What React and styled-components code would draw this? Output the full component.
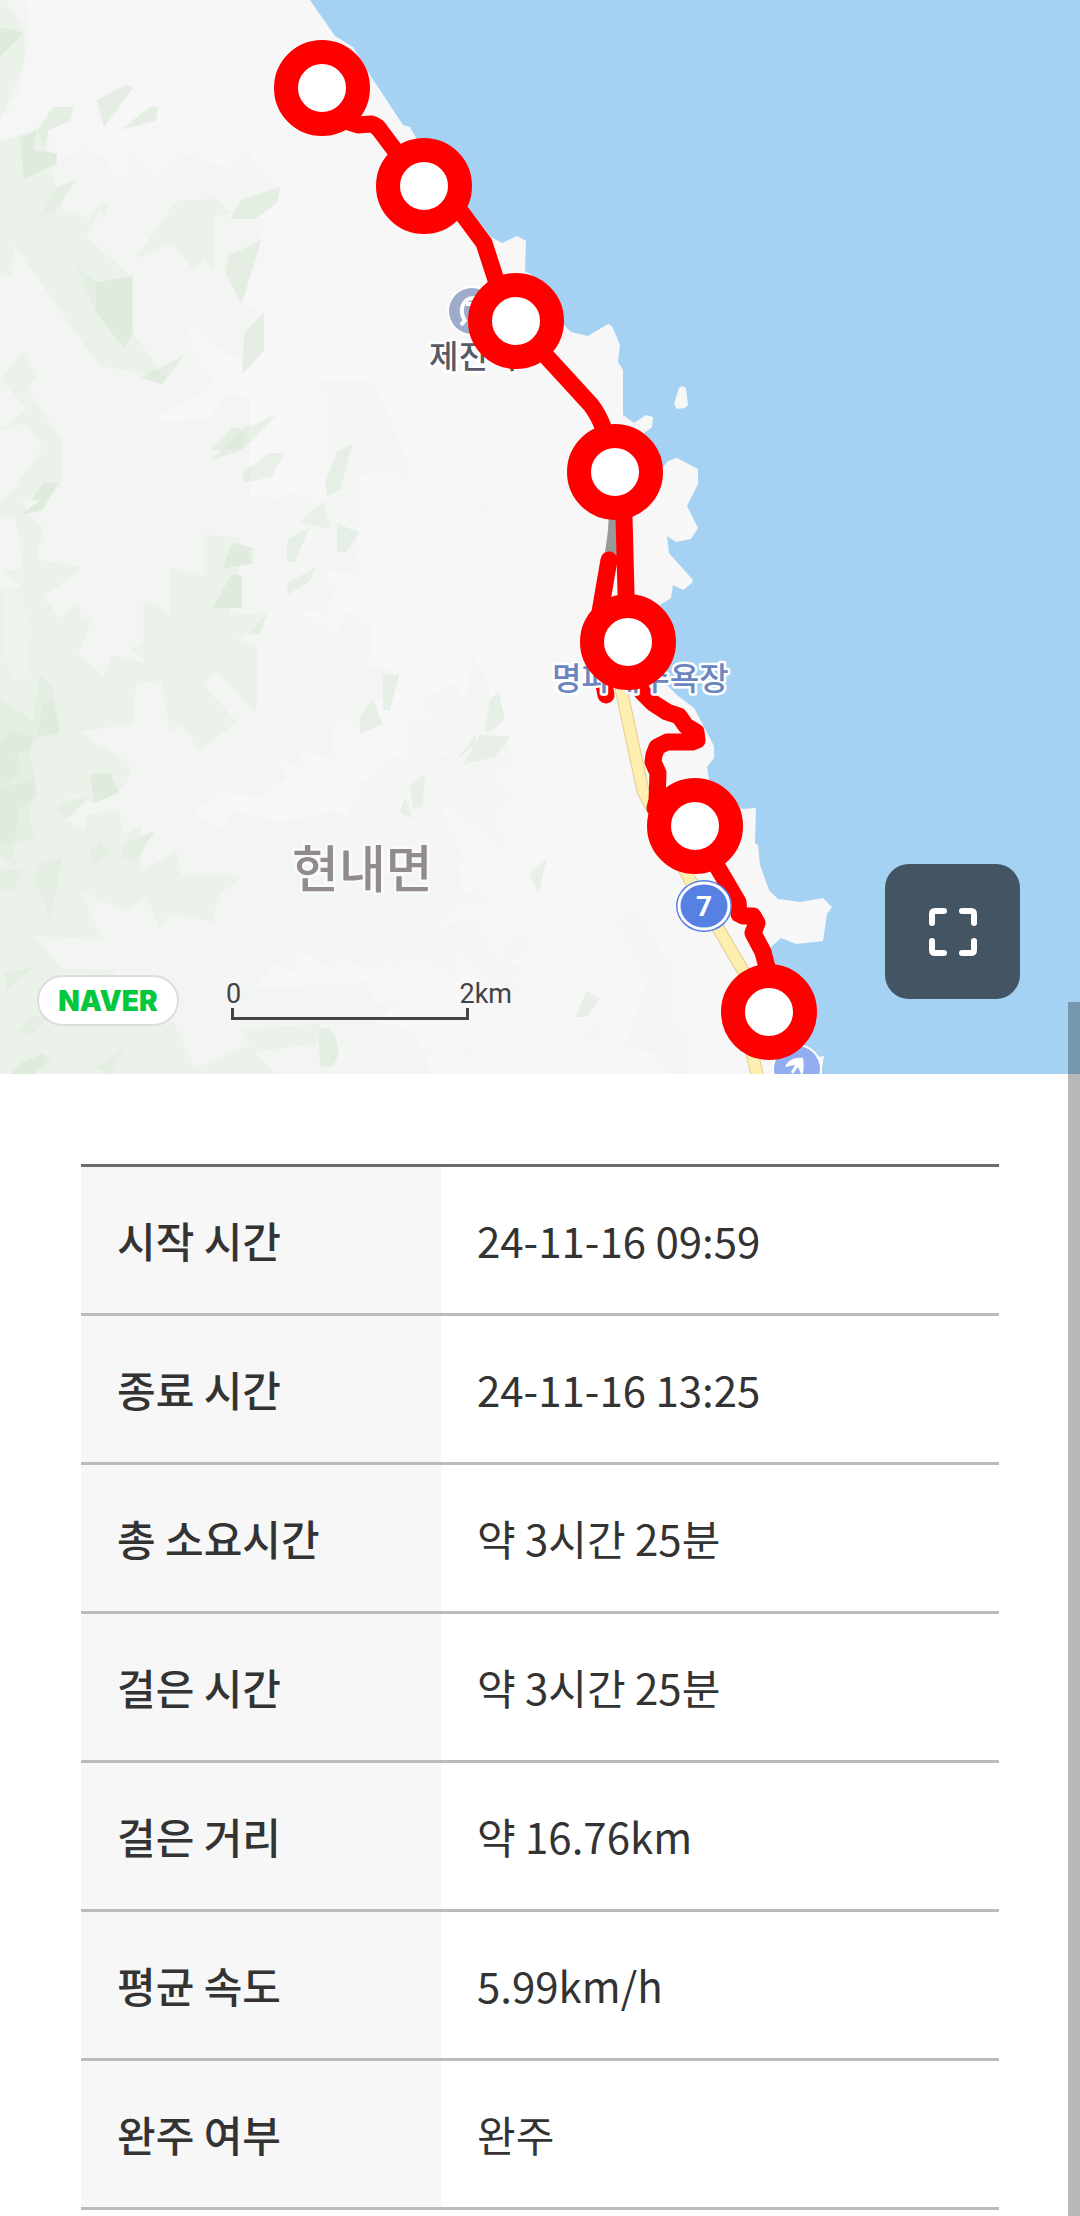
import React from "react";
import styled, { createGlobalStyle } from "styled-components";

const GlobalStyle = createGlobalStyle`
  *, *::before, *::after { box-sizing: border-box; }
  html { scrollbar-width: none; }
  body {
    margin: 0;
    background: #ffffff;
    color: #333333;
    font-family: "Noto Sans CJK KR", "Noto Sans", sans-serif;
  }
`;

const Page = styled.main`
  width: 100%;
`;

const MapPanel = styled.section`
  position: relative;
  background: #a5d1f3;
`;

const MapDrawing = styled.svg`
  display: block;
  width: 100%;
  height: auto;
`;

const MapLabel = styled.text`
  font-family: "Noto Sans CJK KR", sans-serif;
  font-size: ${(p) => p.$size}px;
  font-weight: ${(p) => p.$weight || 500};
  fill: ${(p) => p.$color};
  stroke: ${(p) => p.$halo || "#ffffff"};
  stroke-width: 5px;
  stroke-linejoin: round;
  paint-order: stroke;
`;

const ShieldNumber = styled.text`
  font-family: Roboto, sans-serif;
  font-size: 28px;
  font-weight: 700;
  fill: #ffffff;
  text-anchor: middle;
`;

const Provider = styled.a`
  position: absolute;
  left: 37px;
  bottom: 48px;
  display: flex;
  align-items: center;
  justify-content: center;
  width: 142px;
  height: 51px;
  border: 2px solid #dddddd;
  border-radius: 26px;
  background: #ffffff;
  color: #03c73c;
  font-family: Inter, sans-serif;
  font-size: 28px;
  font-weight: 900;
  line-height: 32px;
  text-decoration: none;
`;

const Scale = styled.div`
  position: absolute;
  left: 226px;
  bottom: 54px;
  width: 286px;
`;

const ScaleLabels = styled.div`
  display: flex;
  justify-content: space-between;
  color: #444444;
  font-family: Roboto, sans-serif;
  font-size: 27px;
  line-height: 24px;
  padding-bottom: 2px;
`;

const ScaleBar = styled.div`
  width: 238px;
  height: 12px;
  margin-left: 5px;
  border: 3px solid #444444;
  border-top: 0;
`;

const FullscreenButton = styled.button`
  position: absolute;
  right: 60px;
  bottom: 75px;
  display: flex;
  align-items: center;
  justify-content: center;
  width: 135px;
  height: 135px;
  padding: 0;
  border: 0;
  border-radius: 24px;
  background: #435463;
`;

const Summary = styled.section`
  padding: 90px 81px 6px;
`;

const RecordTable = styled.table`
  width: 100%;
  border-collapse: separate;
  border-spacing: 0;
  border-top: 3px solid #6b6b6b;
  table-layout: fixed;
`;

const Label = styled.th`
  width: 360px;
  padding: 43px 36px;
  border-bottom: 3px solid #bbbbbb;
  background: #f7f7f7;
  font-size: 42px;
  font-weight: 500;
  line-height: 60px;
  text-align: left;
`;

const Value = styled.td`
  padding: 43px 36px;
  border-bottom: 3px solid #bbbbbb;
  font-size: 42px;
  font-weight: 400;
  line-height: 60px;
`;

const ScrollThumb = styled.div`
  position: fixed;
  top: 1002px;
  right: 0;
  bottom: 0;
  width: 12px;
  background: rgba(0, 0, 0, 0.28);
`;

const records = [
  ["시작 시간", "24-11-16 09:59"],
  ["종료 시간", "24-11-16 13:25"],
  ["총 소요시간", "약 3시간 25분"],
  ["걸은 시간", "약 3시간 25분"],
  ["걸은 거리", "약 16.76km"],
  ["평균 속도", "5.99km/h"],
  ["완주 여부", "완주"],
];

const stamps = [
  [322, 88],
  [424, 186],
  [516, 321],
  [615, 472],
  [628, 642],
  [695, 826],
  [769, 1012],
];

const coast =
  "M0 0H310L335 36L353 47L370 75L403 125L410 127L416 138L465 205L491 237L502 243L517 236L526 241L525 271L532 275L564 325L571 332L588 336L608 324L612 326L620 345L618 362L623 370V415L634 423L646 415L653 417L652 427L644 433L663 467L668 461L677 458L698 469V484L687 506L698 528L691 539L676 542L667 536L669 553L693 580L692 583L683 590L673 585L671 598L660 605L650 660L665 683L677 695L694 708L702 723L714 746V758L707 767L709 780L742 809L756 808L755 843L758 845L760 865L769 890L778 899L800 902L823 898L832 907L827 914L823 941L796 944L781 938L770 948L790 1040L807 1047L817 1057L824 1056L823 1062L821 1074H0Z";

const islet = "M674 404L679 388L682 386L686 388L688 405L685 408L677 409Z";

// Hand-traced relief facets, each sheet in its own units and tone by tone.
const relief = [
  {
    transform: "scale(0.33333 0.34436)",
    tones: {
      "#f5f6f5": "M75 85L130 0H160L235 110L160 150L110 190L60 270L370 210L400 240L360 355L255 375L280 470L370 440L385 350L720 395L690 490L600 420L650 640L780 650L950 700L920 770L850 800L770 770L725 880L560 940L650 1120L450 1225L620 1222L680 1150L805 1160L830 1210L890 1450L960 1420V1568H0V0Z",
      "#f3f5f2": "M0 0H75L90 80L60 270L0 350V410L110 375L145 385L150 480L260 430L330 470L320 500L380 525L395 450L460 520L565 450L690 490L730 430L830 540L700 640L790 640L770 760L680 800L720 880L790 910L730 1040L690 1035L565 940L550 1005L640 1115L450 1225L620 1222L680 1150L805 1160L820 1260L760 1420L830 1455L895 1430L880 1350L945 1340L960 1230V1568H0Z",
      "#eaf2e9": "M0 0H15L75 90L72 185L0 350Z M0 410L110 375L150 480L190 615L265 632L305 585L325 598L308 640L300 610L260 688L385 795L400 970L497 1095L297 1062L40 708L35 805L0 790Z M530 582L650 577L695 617L642 630V788L612 752L581 787L518 705L403 752Z M0 1100L72 1020L110 1090L82 1130L190 1285L182 1410L95 1505L132 1535L128 1568H60L35 1500L0 1505V1470L130 1300L75 1230L0 1250L82 1187Z M905 1515L960 1467V1530Z M610 1552L720 1562V1568H610Z",
      "#e4eee3": "M290 292L375 247L400 254L312 370Z M112 378L160 311H219L212 350L145 378L134 437Z M362 377L450 311H475L468 350Z M120 628L170 543L228 525L162 615Z M690 636L725 580L842 543L832 588L765 636Z M686 742L783 697L725 885L675 790Z M733 967L792 907V1020L727 1085Z M420 1097L552 1032L487 1115Z M635 1335L735 1240L830 1205L725 1307Z M726 1373L805 1315H852L813 1382L733 1402Z M630 1307L700 1240L740 1250L690 1307Z M225 768L290 820L288 905Z",
      "#dfebdd": "M0 80L72 95L0 165Z M60 400L110 378L100 435L170 445V475L72 522Z M288 820L398 802V970L370 1010L288 905Z M440 1085L470 1072L497 1095L487 1115L455 1107Z M65 1495L130 1402H175L120 1488Z M665 1310L720 1255H735L725 1300Z",
    },
  },
  {
    transform: "translate(0 500) scale(0.33333 0.37021)",
    tones: {
      "#f3f5f2": "M0 0H960L990 80L1070 170L1090 205L940 180L1010 240L980 245V305L890 295L880 325L1010 365L1035 305L1115 340L1110 430L1050 445L1180 460L1160 550L1070 500L1140 600L1080 630L985 515L940 615L1000 620L1005 705L900 670L920 740L815 675L860 750L780 800L660 790L580 840L660 890L700 840L840 870L1010 840L1090 890L1040 850L1090 800L1070 775L1190 690L1220 715L1225 600L1315 605L1270 540L1360 500L1400 545L1420 420L1470 520L1400 720L1310 815L1390 1040L1290 1165L1330 1215L1280 1235L1220 1235L1080 1265L1030 1230L1000 1265L895 1215L880 1280L830 1245L760 1320L1100 1300L1120 1360L1200 1350L1100 1430L1250 1460L1300 1552H0Z",
      "#eaf2e9": "M0 0H65L95 50L132 75L108 160L248 182L132 262L180 320L235 277L247 323L280 313L236 415L311 475L338 418L438 440L394 400L430 387V270L510 308V185L613 207V93L720 102L718 190L686 310L785 308L780 335L712 376L801 402V485L843 455L849 555L788 536L765 572L650 464L607 495L711 600L596 678L548 605L508 623L486 486L408 497L400 605L236 626L387 710V752L355 790L280 820L203 785L235 822L200 862L255 893L262 850L355 835L373 905L422 880L423 1003L530 948L545 1015H727L652 1072L641 1140L510 1117L479 1157L439 1070L376 1113L243 1057L307 1187L103 1178L185 1265L345 1270L320 1320L450 1400L522 1410L585 1535L750 1472L725 1430L960 1415L950 1468L765 1492L830 1552H0V242L68 235L12 195L67 182L60 100L40 45L0 48Z",
      "#e4eee3": "M120 470L158 505L160 545L180 630L80 650L110 770L85 860L108 910L40 930L50 990L0 960V535L97 598Z M865 105L928 72L882 168H861Z M1011 63L1078 88L1043 141H1011Z M864 228L946 180L928 222L862 258Z M745 362L803 301L843 328L833 362Z M1150 471H1198L1169 568H1150Z M1080 588L1119 537L1146 603L1080 632Z M1232 778L1275 738L1270 825L1240 836Z M1200 850L1216 800L1237 857Z M162 840L190 818L270 800L200 862Z M360 968L375 925L466 893L405 978Z M102 1022L125 980L188 968L150 1127Z M0 997H70L40 1055L0 1057Z M12 1275L98 1265L20 1325Z M285 1532L375 1480L335 1552Z M955 1430L990 1425L1018 1495L998 1530H960Z M58 1438L92 1390L140 1400L105 1441Z M265 950L300 920L335 950L285 985Z M903 55L968 8L990 80Z",
      "#dfebdd": "M62 40L120 0H145L125 30Z M668 185L697 116L762 130L755 172Z M636 292L695 203H726V292Z M113 638L130 550L162 543L178 628Z M270 739H331L357 790L282 820Z M0 662L35 621L100 642L90 675L0 690Z M0 690L52 685L60 735L10 770L0 765Z M0 775L100 757L110 800L55 835L45 915L0 930Z M62 1520L130 1495L150 1515L100 1552H30Z",
      "#eef3ed": "M10 245L70 265L92 355L80 480L40 485L10 410Z",
    },
  },
  {
    transform: "translate(250 380) scale(0.33333)",
    tones: {
      "#f6f7f6": "M0 0H210L230 60L225 380L110 330L0 350Z M130 250L225 245V340L150 335Z",
      "#f4f6f4": "M205 0H370L485 270L455 315L440 275L327 290L322 570L205 550L225 380L232 60Z M110 500V330L225 380L240 450L210 550L260 620L230 695L130 690L260 760L290 690L365 740L355 850L390 950L190 1080L20 1080V800Z",
      "#e9f0e8": "M0 140L80 103L0 190Z M0 262L55 219H103L65 290L0 305Z M150 425L220 365L243 450Z M0 508L12 510L5 545H0Z",
      "#e6efe5": "M262 213L308 193L272 327L233 347L225 310Z M261 430L329 459L289 516H261Z M330 1015L370 957L396 1030L330 1060Z M712 965L746 935L765 1018L717 1057L705 1040Z M690 1062L780 1070L770 1080H680Z M112 480L178 443L134 546H110Z M112 610L197 562L180 602L112 645Z M400 883H447L418 990H400Z",
      "#f3f6f3": "M520 970L580 960L600 910L640 965L705 885L720 960L705 1045L680 1080H475V1030L555 1025Z M675 405L712 360V395L690 410Z M530 240L540 205L565 185Z",
    },
  },
  {
    transform: "translate(330 720) scale(0.33333)",
    tones: {
      "#f4f6f4": "M90 40L250 10L480 0L560 120L480 180L550 230L490 300L540 395L330 250L410 435L300 430L0 510V360L90 310L50 275L100 230L80 200L140 180L200 105L235 120V20Z M0 510L300 550L450 505L500 555L380 560L300 635L430 585L500 720L570 640L615 675L530 730L590 740L550 780L575 820L470 780L390 690L370 770L275 705L200 745L170 710L150 760L70 700L0 740Z M860 605L905 555L950 615L1028 745V900L1080 960V1062H1010L975 1000L880 985L950 780L895 680Z M25 805L105 780L95 835L25 840Z M0 930L150 905L290 940L215 960L320 1000L250 1030L30 1035Z M370 1025L410 985L440 1000Z M730 950L820 900L800 960Z",
      "#e7efe6": "M90 0H130L160 12L90 41Z M470 0H520L475 38L465 20Z M400 133L450 45L540 50L495 110Z M380 118L440 40L435 75Z M315 95L350 122V128Z M240 195L285 160L278 258L250 268Z M210 275L225 230L248 293L230 290Z M597 462L650 418L625 520Z M735 892L770 812L810 838L770 890Z",
      "#e4ede3": "M0 935L15 945L27 1000L5 1038H0Z",
    },
  },
];

function Stamp({ x, y }) {
  return <circle cx={x} cy={y} r="36" fill="#ffffff" stroke="#ff0000" strokeWidth="24" />;
}

function CourseMap() {
  return (
    <MapDrawing viewBox="0 0 1080 1074" role="img" aria-label="걷기 코스 지도">
      <defs>
        <clipPath id="land">
          <path d={coast} />
        </clipPath>
      </defs>
      <path d={coast} fill="#f7f7f7" />
      <path d={islet} fill="#f7f7f7" />
      <g clipPath="url(#land)">
        {relief.map((sheet) => (
          <g key={sheet.transform} transform={sheet.transform}>
            {Object.entries(sheet.tones).map(([tone, d]) => (
              <path key={tone} d={d} fill={tone} />
            ))}
          </g>
        ))}
      </g>

      <g fill="none" strokeLinejoin="round">
        <path d="M616 665L643 791L690 880L745 974L750 1045L759 1082" stroke="#e6c88c" strokeWidth="13" />
        <path d="M616 665L643 791L690 880L745 974L750 1045L759 1082" stroke="#fcefb0" strokeWidth="11" />
        <path d="M617 500C618 525 616 538 612 562" stroke="#999999" strokeWidth="17" />
      </g>

      <g>
        <circle cx="472" cy="311" r="25" fill="#ffffff" />
        <circle cx="472" cy="311" r="23" fill="#9fabcc" />
        <path
          d="M464 319C459 309 463 298 474 298C485 298 487 312 480 319"
          fill="none"
          stroke="#ffffff"
          strokeWidth="4"
        />
        <path d="M466 304h12M466 319l-5 6" stroke="#ffffff" strokeWidth="4" />
      </g>
      <g>
        <circle cx="797" cy="1069" r="25" fill="#ffffff" />
        <circle cx="797" cy="1069" r="23" fill="#92adf0" />
        <path
          d="M785 1067C788 1060 795 1057 803 1058C804 1065 804 1071 802 1076L798 1067L793 1074L791 1072L795 1065Z"
          fill="#ffffff"
        />
      </g>

      <g fill="none" stroke="#ff0000" strokeWidth="17" strokeLinejoin="round" strokeLinecap="round">
        <path d="M322 88L345 121L358 125L371 124Q377 125 382 133L394 149L424 186L461 212L484 243L496 280L516 321L547 357L591 405Q598 414 603 427L615 472L624 517L626 593L628 642L642 692L653 703L667 712L679 716L686 726L696 732L697 740L692 742L667 742L657 747L654 755L653 762L658 773L657 800L655 808L695 826L718 868L738 902L739 914L743 916L753 916L757 923L753 933L763 952L769 975L769 1012" />
        <path d="M609 560L600 612L599 660L606 695" />
      </g>

      <MapLabel x="429" y="368" $size={32} $color="#555b66">제진역</MapLabel>
      <MapLabel x="552" y="690" $size={32} $color="#6b86be">명파해수욕장</MapLabel>
      <MapLabel x="292" y="888" $size={51} $color="#918b8b" $halo="#fafafa">현내면</MapLabel>

      {stamps.map(([x, y]) => (
        <Stamp key={y} x={x} y={y} />
      ))}

      <g>
        <ellipse cx="704" cy="906" rx="28" ry="26" fill="#5680e2" />
        <ellipse cx="704" cy="906" rx="25" ry="23" fill="none" stroke="#ffffff" strokeWidth="3" />
        <ShieldNumber x="704" y="916">7</ShieldNumber>
      </g>
    </MapDrawing>
  );
}

function ExpandIcon() {
  return (
    <svg width="48" height="48" viewBox="0 0 48 48" fill="none" stroke="#ffffff" strokeWidth="6" strokeLinecap="round" strokeLinejoin="round" aria-hidden="true">
      <path d="M3 15V6Q3 3 6 3H15M33 3H42Q45 3 45 6V15M45 33V42Q45 45 42 45H33M15 45H6Q3 45 3 42V33" />
    </svg>
  );
}

export default function App() {
  return (
    <Page>
      <GlobalStyle />
      <MapPanel>
        <CourseMap />
        <Provider href="#naver">NAVER</Provider>
        <Scale>
          <ScaleLabels>
            <span>0</span>
            <span>2km</span>
          </ScaleLabels>
          <ScaleBar />
        </Scale>
        <FullscreenButton type="button" aria-label="전체 화면">
          <ExpandIcon />
        </FullscreenButton>
      </MapPanel>
      <Summary>
        <RecordTable>
          <tbody>
            {records.map(([label, value]) => (
              <tr key={label}>
                <Label scope="row">{label}</Label>
                <Value>{value}</Value>
              </tr>
            ))}
          </tbody>
        </RecordTable>
      </Summary>
      <ScrollThumb />
    </Page>
  );
}
